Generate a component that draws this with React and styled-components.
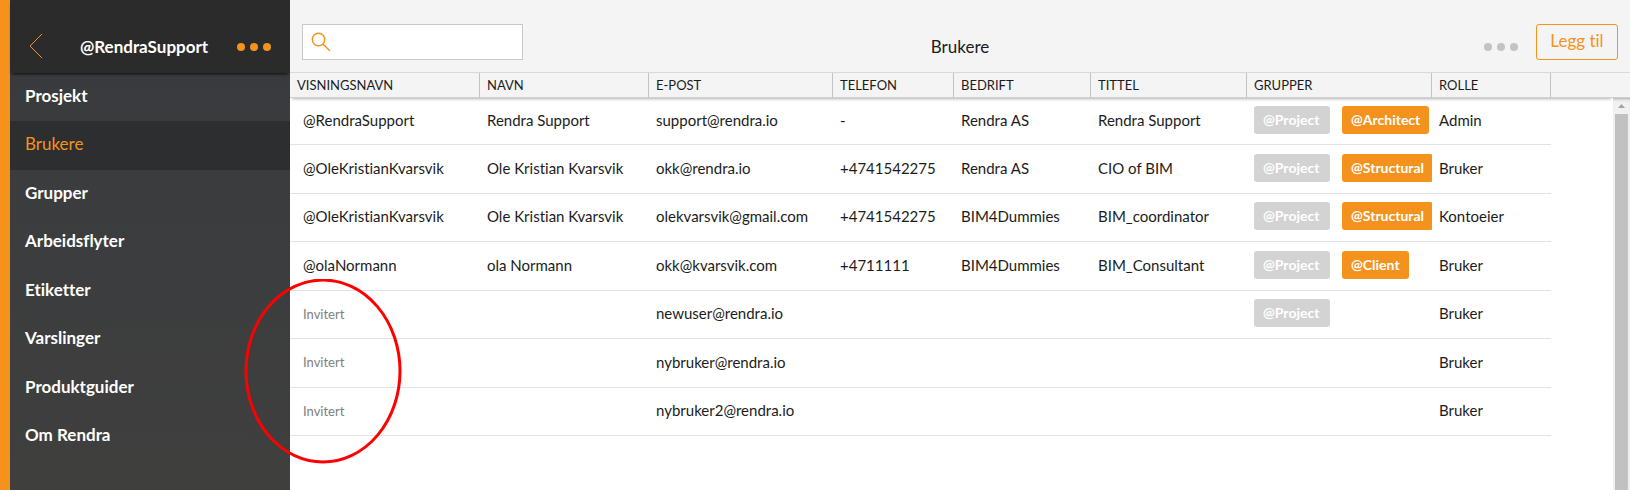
import React, { useState } from "react";
import styled, { createGlobalStyle } from "styled-components";

const menu = [
  "Prosjekt",
  "Brukere",
  "Grupper",
  "Arbeidsflyter",
  "Etiketter",
  "Varslinger",
  "Produktguider",
  "Om Rendra",
];

const columns = [
  { name: "Visningsnavn", width: 190 },
  { name: "Navn", width: 169 },
  { name: "E-post", width: 184 },
  { name: "Telefon", width: 121 },
  { name: "Bedrift", width: 137 },
  { name: "Tittel", width: 156 },
  { name: "Grupper", width: 185 },
  { name: "Rolle", width: 119 },
];

const users = [
  { nick: "@RendraSupport", name: "Rendra Support", mail: "support@rendra.io", phone: "-", company: "Rendra AS", title: "Rendra Support", groups: ["@Project", "@Architect"], role: "Admin" },
  { nick: "@OleKristianKvarsvik", name: "Ole Kristian Kvarsvik", mail: "okk@rendra.io", phone: "+4741542275", company: "Rendra AS", title: "CIO of BIM", groups: ["@Project", "@Structural"], role: "Bruker" },
  { nick: "@OleKristianKvarsvik", name: "Ole Kristian Kvarsvik", mail: "olekvarsvik@gmail.com", phone: "+4741542275", company: "BIM4Dummies", title: "BIM_coordinator", groups: ["@Project", "@Structural"], role: "Kontoeier" },
  { nick: "@olaNormann", name: "ola Normann", mail: "okk@kvarsvik.com", phone: "+4711111", company: "BIM4Dummies", title: "BIM_Consultant", groups: ["@Project", "@Client"], role: "Bruker" },
  { invited: true, mail: "newuser@rendra.io", groups: ["@Project"], role: "Bruker" },
  { invited: true, mail: "nybruker@rendra.io", groups: [], role: "Bruker" },
  { invited: true, mail: "nybruker2@rendra.io", groups: [], role: "Bruker" },
];

const Dots = () => (
  <svg width="34" height="10" viewBox="0 0 34 10" fill="currentColor" aria-hidden="true">
    <circle cx="4" cy="5" r="4" />
    <circle cx="17" cy="5" r="4" />
    <circle cx="30" cy="5" r="4" />
  </svg>
);

const App = () => {
  const [search, setSearch] = useState("");

  return (
    <Page>
      <GlobalStyle />
      <Sidebar>
        <SideHeader>
          <IconButton aria-label="Tilbake">
            <svg width="14" height="28" viewBox="0 0 14 28" fill="none" stroke="currentColor" aria-hidden="true">
              <path d="M13 1 1 13l12 12" />
            </svg>
          </IconButton>
          <SideTitle>@RendraSupport</SideTitle>
          <IconButton aria-label="Mer">
            <Dots />
          </IconButton>
        </SideHeader>
        <Menu>
          {menu.map((item) => (
            <MenuItem key={item} href="#" $active={item === "Brukere"}>
              {item}
            </MenuItem>
          ))}
        </Menu>
      </Sidebar>

      <Main>
        <Toolbar>
          <SearchBox>
            <svg width="20" height="20" viewBox="0 0 20 20" fill="none" stroke="#f4921e" strokeWidth="1.4" aria-hidden="true">
              <circle cx="7.5" cy="7.5" r="6.2" />
              <path d="m12 12 7 7" />
            </svg>
            <SearchInput aria-label="Søk" value={search} onChange={(e) => setSearch(e.target.value)} />
          </SearchBox>
          <Title>Brukere</Title>
          <Actions>
            <IconButton $muted aria-label="Flere valg">
              <Dots />
            </IconButton>
            <AddButton>Legg til</AddButton>
          </Actions>
        </Toolbar>

        <Content>
          <TableArea>
            <Table>
              <colgroup>
                {columns.map((col) => (
                  <Col key={col.name} $width={col.width} />
                ))}
                <col />
              </colgroup>
              <Head>
                <tr>
                  {columns.map((col) => (
                    <Th key={col.name} scope="col">{col.name}</Th>
                  ))}
                  <EmptyTh />
                </tr>
              </Head>
              <tbody>
                {users.map((user, index) => (
                  <Row key={index}>
                    <Td $first>{user.invited ? <Invited>Invitert</Invited> : user.nick}</Td>
                    <Td>{user.name}</Td>
                    <Td>{user.mail}</Td>
                    <Td>{user.phone}</Td>
                    <Td>{user.company}</Td>
                    <Td>{user.title}</Td>
                    <Td>
                      <Tags>
                        {user.groups.map((group) => (
                          <Tag key={group} $muted={group === "@Project"}>{group}</Tag>
                        ))}
                      </Tags>
                    </Td>
                    <Td>{user.role}</Td>
                  </Row>
                ))}
              </tbody>
            </Table>
          </TableArea>
          <ScrollSide>
            <ScrollCap />
            <ScrollTrack>
              <svg width="7" height="4" viewBox="0 0 7 4" fill="#a3a3a3" aria-hidden="true">
                <path d="M3.5 0 7 4H0z" />
              </svg>
              <Thumb />
            </ScrollTrack>
          </ScrollSide>
        </Content>
      </Main>

      <Marker viewBox="0 0 158 186" aria-hidden="true">
        <ellipse cx="79" cy="92" rx="77" ry="91" fill="none" stroke="#fe0000" strokeWidth="3" />
      </Marker>
    </Page>
  );
};

const GlobalStyle = createGlobalStyle`
  * {
    box-sizing: border-box;
  }
  body {
    margin: 0;
    font-family: Lato, "Open Sans", sans-serif;
    font-size: 15px;
    font-variant-ligatures: none;
    color: #1c1c1c;
    background: #fff;
  }
  button, input {
    font-family: inherit;
    font-variant-ligatures: inherit;
  }
`;

const Page = styled.div`
  position: relative;
  display: flex;
  min-height: 100vh;
`;

const Sidebar = styled.aside`
  flex: 0 0 290px;
  display: flex;
  flex-direction: column;
  border-left: 10px solid #f4921e;
  background: linear-gradient(#36393c, #3b3c3e 35%, #3f3f3e);
`;

const SideHeader = styled.div`
  display: flex;
  align-items: center;
  justify-content: space-between;
  height: 73px;
  padding: 20px 19px 0 19px;
  background: #2b2b2b;
  box-shadow: 0 3px 3px -2px rgba(0, 0, 0, 0.8);
`;

const SideTitle = styled.h2`
  margin: 0;
  padding-left: 8px;
  font-size: 17px;
  line-height: 24px;
  color: #fff;
`;

const IconButton = styled.button`
  display: flex;
  padding: 0;
  border: none;
  background: none;
  color: ${(props) => (props.$muted ? "#c3c3c3" : "#f4921e")};
  cursor: pointer;
`;

const Menu = styled.nav`
  display: flex;
  flex-direction: column;
`;

const MenuItem = styled.a`
  display: flex;
  align-items: center;
  height: 48px;
  padding: 0 0 4px 15px;
  font-size: 17px;
  font-weight: ${(props) => (props.$active ? 400 : 700)};
  text-decoration: none;
  color: ${(props) => (props.$active ? "#f4921e" : "#fff")};
  background: ${(props) => (props.$active ? "#2d2e30" : "transparent")};

  &:nth-child(even) {
    height: 49px;
  }
`;

const Main = styled.main`
  flex: 1;
  min-width: 0;
  display: flex;
  flex-direction: column;
`;

const Toolbar = styled.header`
  display: grid;
  grid-template-columns: 1fr auto 1fr;
  align-items: center;
  height: 73px;
  padding: 11px 12px 0;
  background: #f4f4f4;
  border-bottom: 1px solid #d9d9d9;
`;

const SearchBox = styled.label`
  display: flex;
  align-items: center;
  width: 221px;
  height: 36px;
  padding: 0 8px;
  gap: 8px;
  background: #fff;
  border: 1px solid #c8c8c8;
`;

const SearchInput = styled.input`
  flex: 1;
  min-width: 0;
  border: none;
  outline: none;
  background: none;
  font-size: 15px;
`;

const Title = styled.h1`
  margin: 0;
  padding-top: 10px;
  font-size: 17px;
  line-height: 24px;
  font-weight: 400;
`;

const Actions = styled.div`
  display: flex;
  align-items: center;
  justify-content: flex-end;
  gap: 18px;

  ${IconButton} {
    padding-top: 10px;
  }
`;

const AddButton = styled.button`
  width: 82px;
  height: 36px;
  padding: 0 0 2px;
  border: 1px solid #f4921e;
  border-radius: 3px;
  background: transparent;
  color: #f4921e;
  font-size: 17px;
  cursor: pointer;
`;

const Content = styled.div`
  flex: 1;
  display: flex;
`;

const TableArea = styled.div`
  flex: 1;
  min-width: 0;
`;

const Table = styled.table`
  width: 100%;
  table-layout: fixed;
  border-collapse: separate;
  border-spacing: 0;
`;

const Col = styled.col`
  width: ${(props) => props.$width}px;
`;

const Head = styled.thead`
  background: #f4f4f4;
  box-shadow: 0 3px 3px -2px rgba(0, 0, 0, 0.3);
`;

const Th = styled.th`
  height: 25px;
  padding: 0 0 0 7px;
  border-right: 1px solid #c3c3c3;
  border-bottom: 1px solid #cfcfcf;
  font-size: 13px;
  font-weight: 400;
  line-height: 18px;
  text-align: left;
  text-transform: uppercase;
`;

const EmptyTh = styled.td`
  padding: 0;
  border-bottom: 1px solid #cfcfcf;
`;

const Row = styled.tr`
  height: 48px;

  &:nth-child(even) {
    height: 49px;
  }
  &:first-child {
    height: 47px;
  }
`;

const Td = styled.td`
  padding: 0 0 3px ${(props) => (props.$first ? 13 : 7)}px;
  border-bottom: 1px solid #e2e2e2;
  line-height: 20px;
  white-space: nowrap;
  overflow: hidden;
`;

const Invited = styled.span`
  font-size: 13px;
  color: #808080;
`;

const Tags = styled.div`
  display: flex;
  gap: 12px;
`;

const Tag = styled.span`
  flex: none;
  min-width: ${(props) => (props.$muted ? 76 : 0)}px;
  height: 28px;
  padding: 0 9px;
  border-radius: 3px;
  background: ${(props) => (props.$muted ? "#d3d3d3" : "#f4921e")};
  color: #fff;
  font-size: 14px;
  font-weight: 700;
  line-height: 27px;
`;

const ScrollSide = styled.div`
  flex: 0 0 17px;
  display: flex;
  flex-direction: column;
`;

const ScrollCap = styled.div`
  height: 25px;
  background: #f4f4f4;
  border-bottom: 1px solid #cfcfcf;
`;

const ScrollTrack = styled.div`
  flex: 1;
  display: flex;
  flex-direction: column;
  align-items: center;
  padding-top: 6px;
  gap: 6px;
  background: #f1f1f1;
  box-shadow: inset 0 3px 3px -2px rgba(0, 0, 0, 0.3);
`;

const Thumb = styled.div`
  flex: 1;
  width: 13px;
  background: #c1c1c1;
`;

// red ring around the invited users, lies over sidebar and table
const Marker = styled.svg`
  position: absolute;
  left: 244px;
  top: 279px;
  width: 158px;
  height: 186px;
  pointer-events: none;
`;

export default App;
